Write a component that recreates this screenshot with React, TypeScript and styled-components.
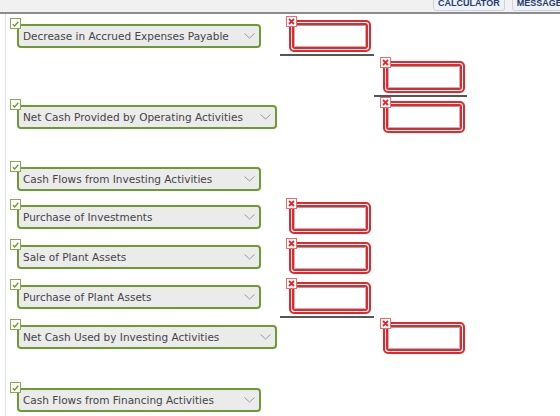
import React from 'react';
import styled, { createGlobalStyle } from 'styled-components';

const GlobalStyle = createGlobalStyle`
  html, body {
    margin: 0;
    padding: 0;
    background: #ffffff;
    overflow: hidden;
  }
`;

interface Row {
  height: number;
  label?: string;
  wide?: boolean;
  selectTop?: number;
  colA?: boolean;
  colB?: boolean;
  lineA?: boolean;
  lineB?: boolean;
}

const ROWS: Row[] = [
  { height: 41, label: 'Decrease in Accrued Expenses Payable', selectTop: 8, colA: true, lineA: true },
  { height: 40, colB: true, lineB: true },
  { height: 40, label: 'Net Cash Provided by Operating Activities', wide: true, selectTop: 8, colB: true },
  { height: 23 },
  { height: 38, label: 'Cash Flows from Investing Activities', selectTop: 7 },
  { height: 40, label: 'Purchase of Investments', selectTop: 7, colA: true },
  { height: 40, label: 'Sale of Plant Assets', selectTop: 7, colA: true },
  { height: 40, label: 'Purchase of Plant Assets', selectTop: 7, colA: true, lineA: true },
  { height: 40, label: 'Net Cash Used by Investing Activities', wide: true, selectTop: 7, colB: true },
  { height: 23 },
  { height: 40, label: 'Cash Flows from Financing Activities', selectTop: 7 },
];

const Page = styled.div`
  width: 560px;
  height: 416px;
  overflow: hidden;
`;

// toolbar is scrolled so only the lower half of its buttons shows
const TopBar = styled.div`
  height: 11px;
  background: #f1f1f1;
  border-bottom: 2px solid #8c8c8c;
  display: flex;
  align-items: flex-end;
  gap: 7px;
  padding-left: 433px;
  padding-bottom: 1px;
  overflow: hidden;
`;

const BarButton = styled.button`
  flex-shrink: 0;
  height: 20px;
  padding: 0 4px 2px 4px;
  background: #eef1f5;
  border: 1px solid #cdd3dc;
  border-radius: 3px;
  color: #233a6b;
  font-family: 'Liberation Sans', Arial, sans-serif;
  font-weight: bold;
  font-size: 9px;
  line-height: 9px;
  display: flex;
  align-items: flex-end;
  white-space: nowrap;
`;

const Sheet = styled.div`
  margin-left: 5px;
  border-left: 1px solid #dde2ea;
  height: 402px;
  padding-top: 2px;
  display: flex;
  flex-direction: column;
`;

const Line = styled.div<{ $h: number }>`
  height: ${(p) => p.$h}px;
  display: grid;
  grid-template-columns: 274px 94px 93px;
  flex-shrink: 0;
`;

const LabelCell = styled.div<{ $top: number }>`
  padding-top: ${(p) => p.$top}px;
  padding-left: 11px;
`;

const SelectWrap = styled.div<{ $wide?: boolean }>`
  position: relative;
  width: ${(p) => (p.$wide ? 260 : 244)}px;
  height: 24px;
  box-sizing: border-box;
  border: 2px solid #6f9a33;
  border-radius: 4px;
  background: #ebebeb;
  display: flex;
  align-items: center;
  justify-content: space-between;
  padding: 0 4px;
`;

const SelectText = styled.span`
  font-family: 'DejaVu Sans', Verdana, sans-serif;
  font-size: 10.5px;
  color: #444444;
  white-space: nowrap;
`;

const Badge = styled.span<{ $kind: 'ok' | 'err' }>`
  position: absolute;
  width: 11px;
  height: 11px;
  box-sizing: border-box;
  background: #ffffff;
  border: 1px solid ${(p) => (p.$kind === 'ok' ? '#86ad4c' : '#ef6a6a')};
  display: flex;
  align-items: center;
  justify-content: center;
  z-index: 2;
`;

const OkBadge = styled(Badge)`
  top: -8px;
  left: -9px;
`;

const ErrBadge = styled(Badge)`
  top: -6px;
  left: -5px;
`;

const AmountCell = styled.div<{ $pad: number }>`
  padding-top: 4px;
  padding-left: ${(p) => p.$pad}px;
  display: flex;
  flex-direction: column;
  align-items: flex-start;
`;

const AmountBox = styled.div`
  position: relative;
  width: 82px;
  height: 32px;
  box-sizing: border-box;
  border: 2px solid #e5262c;
  border-radius: 5px;
  padding: 1px;
  background: #ffffff;
`;

const AmountInner = styled.div`
  height: 100%;
  box-sizing: border-box;
  border: 2px solid #e5262c;
  border-radius: 3px;
  background: #ffffff;
`;

const AmountInput = styled.div`
  height: 100%;
  box-sizing: border-box;
  border: 1px solid #b9b9b9;
  border-top-color: #a0a0a0;
  background: #ffffff;
`;

const Rule = styled.div<{ $w: number; $shift: number }>`
  margin-top: 2px;
  margin-left: ${(p) => -p.$shift}px;
  width: ${(p) => p.$w}px;
  height: 2px;
  background: #555555;
`;

const Check = () => (
  <svg width="7" height="6" viewBox="0 0 7 6">
    <polyline points="0.8,3.2 2.7,5 6.3,0.8" fill="none" stroke="#6f9a33" strokeWidth="1.4" />
  </svg>
);

const Cross = () => (
  <svg width="7" height="7" viewBox="0 0 7 7">
    <path d="M1 1 L6 6 M6 1 L1 6" stroke="#e5262c" strokeWidth="1.8" />
  </svg>
);

const Chevron = () => (
  <svg width="11" height="6" viewBox="0 0 11 6">
    <polyline points="0.5,0.5 5.5,5 10.5,0.5" fill="none" stroke="#9a9a9a" strokeWidth="1" />
  </svg>
);

function Amount({ pad, line, ruleW }: { pad: number; line?: boolean; ruleW: number }) {
  return (
    <AmountCell $pad={pad}>
      <AmountBox>
        <ErrBadge $kind="err">
          <Cross />
        </ErrBadge>
        <AmountInner>
          <AmountInput />
        </AmountInner>
      </AmountBox>
      {line && <Rule $w={ruleW} $shift={pad} />}
    </AmountCell>
  );
}

function App() {
  return (
    <Page>
      <GlobalStyle />
      <TopBar>
        <BarButton>CALCULATOR</BarButton>
        <BarButton>MESSAGE INSTRUCTOR</BarButton>
      </TopBar>
      <Sheet>
        {ROWS.map((row, i) => (
          <Line key={i} $h={row.height}>
            <LabelCell $top={row.selectTop ?? 0}>
              {row.label && (
                <SelectWrap $wide={row.wide}>
                  <OkBadge $kind="ok">
                    <Check />
                  </OkBadge>
                  <SelectText>{row.label}</SelectText>
                  <Chevron />
                </SelectWrap>
              )}
            </LabelCell>
            <div>{row.colA && <Amount pad={9} line={row.lineA} ruleW={94} />}</div>
            <div>{row.colB && <Amount pad={9} line={row.lineB} ruleW={93} />}</div>
          </Line>
        ))}
      </Sheet>
    </Page>
  );
}

export default App;
